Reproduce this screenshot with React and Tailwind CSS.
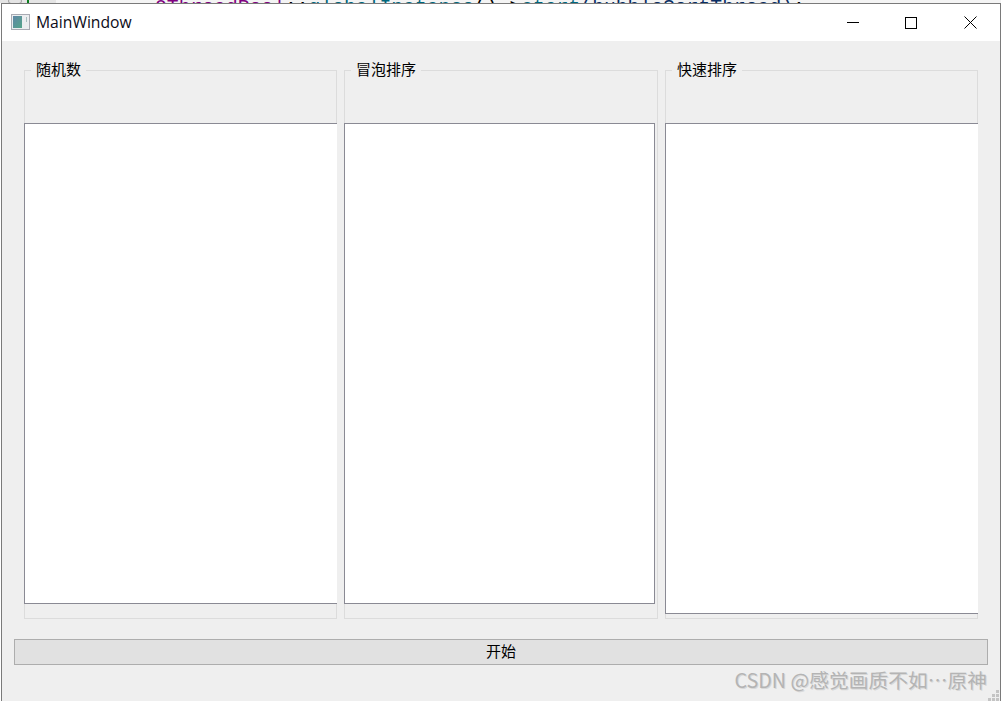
const cjk = "font-['Noto_Sans_CJK_SC','Liberation_Sans',sans-serif]";

function GroupBox({ title, widthClass, editClass }) {
  return (
    <div className={`relative h-[549px] border border-[#dcdcdc] ${widthClass}`}>
      <div className={`absolute -top-[12px] left-[6px] bg-[#efefef] px-[5px] text-[15px] leading-[20px] text-black ${cjk}`}>
        {title}
      </div>
      <div className={`mt-[52px] -ml-px bg-white border-t border-l border-b border-[#8a8a94] ${editClass}`} />
    </div>
  );
}

function AppIcon() {
  return (
    <svg width="19" height="16" viewBox="0 0 19 16">
      <defs>
        <linearGradient id="g" x1="0" y1="0" x2="1" y2="1">
          <stop offset="0" stopColor="#5f86a6" />
          <stop offset="1" stopColor="#55a58a" />
        </linearGradient>
      </defs>
      <rect x="0.5" y="0.5" width="18" height="15" fill="#eceef0" stroke="#a9abb3" />
      <rect x="2" y="2" width="9" height="12" fill="url(#g)" />
      <rect x="15" y="3" width="1" height="5" fill="#a8c0c0" />
    </svg>
  );
}

function Grip() {
  const pts = [[8, 0], [4, 4], [8, 4], [0, 8], [4, 8], [8, 8]];
  return (
    <svg width="11" height="11" viewBox="0 0 11 11">
      {pts.map(([x, y]) => (
        <rect key={`${x}-${y}`} x={x} y={y} width="3" height="3" fill="#c4c4c4" />
      ))}
    </svg>
  );
}

export default function App() {
  return (
    <div className="relative flex h-[701px] w-[1001px] flex-col overflow-hidden bg-white">
      <div className="relative h-[3px] shrink-0 overflow-hidden bg-[#f4f4f4]">
        <div className="absolute inset-y-0 left-0 w-[56px] bg-[#e4e4e4]" />
        <div className="absolute left-[27px] top-0 h-[3px] w-[2px] bg-[#0a7d1e]" />
        <div className="absolute left-[8px] -top-[2px] h-[6px] w-[14px] rounded-full border border-[#a0a0a0]" />
        <div className="absolute left-[155px] -top-[4px] whitespace-nowrap font-['Liberation_Mono',monospace] text-[19.7px] leading-[24px]">
          <span className="text-[#800080]">QThreadPool</span>
          <span className="text-black">::</span>
          <span className="text-[#00677c]">globalInstance</span>
          <span className="text-black">()-&gt;</span>
          <span className="text-[#00677c]">start</span>
          <span className="text-[#092e64]">(bubbleSortThread)</span>
          <span className="text-black">;</span>
        </div>
      </div>

      <div className="ml-px flex min-h-0 flex-1 flex-col border-x border-t border-[#7a7a7a]">
        <div className="flex h-[37px] shrink-0 items-center bg-white">
          <div className="ml-[9px] -mt-[1px] flex items-center">
            <AppIcon />
          </div>
          <span className="ml-[6px] font-['Open_Sans',sans-serif] text-[15.7px] text-[#0b0b18]">MainWindow</span>
          <div className="ml-auto flex h-full text-black">
            <div className="flex w-[58px] items-center justify-center pr-[3px]">
              <svg width="12" height="12" viewBox="0 0 12 12"><path d="M0 5.5h12" stroke="currentColor" fill="none" /></svg>
            </div>
            <div className="flex w-[58px] items-center justify-center pr-[3px]">
              <svg width="12" height="12" viewBox="0 0 12 12"><rect x="0.5" y="0.5" width="11" height="11" stroke="currentColor" fill="none" /></svg>
            </div>
            <div className="flex w-[59px] items-center justify-center pr-px">
              <svg width="13" height="13" viewBox="0 0 13 13"><path d="M0.5 0.5l12 12M12.5 0.5l-12 12" stroke="currentColor" fill="none" /></svg>
            </div>
          </div>
        </div>

        <div className="relative flex flex-1 flex-col bg-[#efefef]">
          <div className="flex gap-[7px] pl-[22px] pt-[29px]">
            <GroupBox title="随机数" widthClass="w-[313px]" editClass="-mr-px h-[481px]" />
            <GroupBox title="冒泡排序" widthClass="w-[314px]" editClass="h-[481px] w-[311px] border-r" />
            <GroupBox title="快速排序" widthClass="w-[313px]" editClass="-mr-px h-[491px]" />
          </div>

          <div className={`ml-[12px] mt-[20px] flex h-[26px] w-[974px] items-center justify-center border border-[#adadad] bg-[#e1e1e1] pb-[2px] text-[15px] text-black ${cjk}`}>
            开始
          </div>

          <div className={`absolute bottom-[8px] right-[13px] whitespace-nowrap text-[19.75px] leading-[26px] text-[#b4b4b4] [text-shadow:1px_1px_0_#d8d8d8] ${cjk}`}>
            CSDN @感觉画质不如…原神
          </div>
          <div className="absolute bottom-0 right-px flex">
            <Grip />
          </div>
        </div>
      </div>
    </div>
  );
}
